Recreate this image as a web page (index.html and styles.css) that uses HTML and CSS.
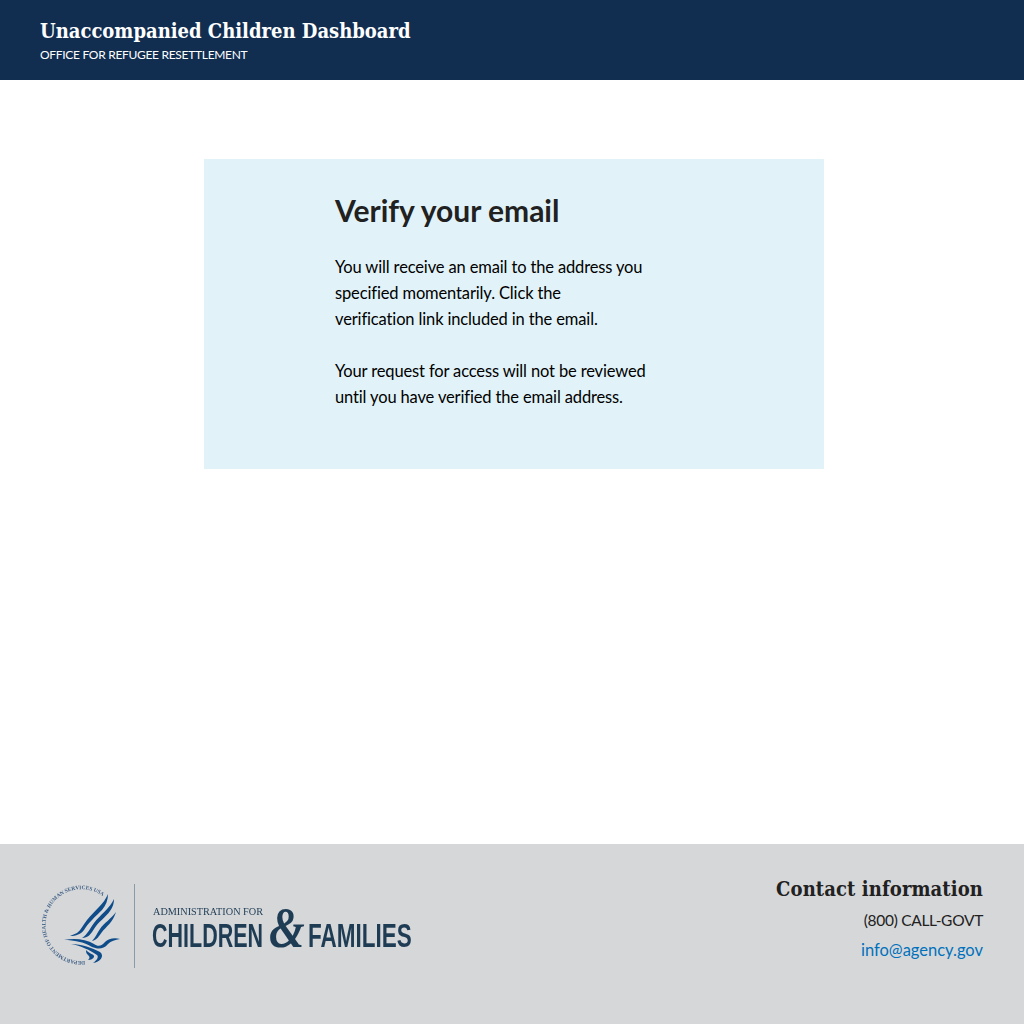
FILE: index.html
```html
<!DOCTYPE html>
<html lang="en">
<head>
  <meta charset="UTF-8">
  <meta name="viewport" content="width=device-width, initial-scale=1.0">
  <title>Unaccompanied Children Dashboard</title>
  <link rel="stylesheet" href="styles.css">
</head>
<body>

  <header class="site-header">
    <div class="site-title">Unaccompanied Children Dashboard</div>
    <div class="site-subtitle">OFFICE FOR REFUGEE RESETTLEMENT</div>
  </header>

  <main class="site-main">
    <section class="notice">
      <div class="notice-body">
        <h1>Verify your email</h1>
        <p>You will receive an email to the address you<br>specified momentarily. Click the<br>verification link included in the email.</p>
        <p>Your request for access will not be reviewed<br>until you have verified the email address.</p>
      </div>
    </section>
  </main>

  <footer class="site-footer">
    <svg class="logo" width="372" height="84" viewBox="0 0 372 84" aria-label="Administration for Children and Families">
      <defs>
        <path id="seal-ring" d="M45 77 A36 36 0 1 1 69 18"/>
      </defs>
      <!-- seal -->
      <text class="seal-text"><textPath href="#seal-ring">DEPARTMENT OF HEALTH &amp; HUMAN SERVICES USA</textPath></text>
      <g class="eagle">
        <path d="M68 10 C64 20 55 26 47 36 C43 41 41 46 37 49 L30 52 C36 52 41 50 44 46 C48 39 56 32 62 26 C66 21 68 16 68 10Z"/>
        <path d="M74 15 C70 24 60 31 54 39 C50 44 48 50 42 54 C48 54 51 50 54 45 C58 38 66 33 70 27 C73 23 74 19 74 15Z"/>
        <path d="M76 28 C71 35 64 39 60 45 C57 49 56 53 52 57 C57 56 59 52 62 48 C66 43 73 38 76 28Z"/>
        <path d="M24 56 C34 54 46 55 54 60 C58 63 62 62 65 58 C68 55 74 53 80 55 C75 56 71 57 68 60 C63 66 57 65 52 63 C44 58 34 56 24 56Z"/>
        <path d="M31 60 C42 60 52 64 60 68 C65 72 60 78 53 79 C57 76 59 73 57 71 C50 66 41 62 31 60Z"/>
        <path d="M46 66 C49 70 55 70 54 73 C53 75 51 76 48 76 C50 74 50 73 48 71 C46 69 46 68 46 66Z"/>
      </g>
      <rect class="rule" x="94" y="0" width="1" height="84"/>
      <!-- wordmark -->
      <text class="wm-small" x="113" y="31" textLength="110" lengthAdjust="spacingAndGlyphs">ADMINISTRATION FOR</text>
      <text class="wm-big" transform="translate(112 63) scale(0.632 1)">CHILDREN</text>
      <text class="wm-amp" transform="translate(229 63) scale(0.82 1)">&amp;</text>
      <text class="wm-big" transform="translate(268 63) scale(0.662 1)">FAMILIES</text>
    </svg>
    <div class="contact">
      <div class="contact-title">Contact information</div>
      <div class="contact-line contact-phone">(800) CALL-GOVT</div>
      <div class="contact-line"><a href="#">info@agency.gov</a></div>
    </div>
  </footer>

</body>
</html>
```

FILE: styles.css
```css
html, body {
  margin: 0;
  padding: 0;
}

body {
  display: flex;
  flex-direction: column;
  min-height: 100vh;
  font-family: "Lato", "Noto Sans", sans-serif;
  font-variant-ligatures: none;
  color: #000;
  background-color: #fff;
}

.site-header {
  height: 80px;
  box-sizing: border-box;
  padding: 17px 40px 0;
  background-color: #112e51;
  color: #fff;
}

.site-title {
  font-family: "DejaVu Serif Condensed", "DejaVu Serif", serif;
  font-weight: bold;
  font-size: 20px;
  line-height: 28px;
}

.site-subtitle {
  font-size: 12px;
  line-height: 20px;
  letter-spacing: -0.3px;
}

.site-main {
  flex: 1;
  padding: 79px 200px 0 204px;
}

.notice {
  box-sizing: border-box;
  width: 620px;
  height: 310px;
  padding: 31px 0 0 131px;
  background-color: #e1f3f8;
}

.notice h1 {
  margin: 0 0 24px;
  font-size: 30px;
  line-height: 40px;
  font-weight: bold;
  color: #212121;
}

.notice p {
  margin: 0 0 26px;
  font-size: 16.5px;
  line-height: 26px;
  letter-spacing: -0.14px;
}

.site-footer {
  display: flex;
  justify-content: space-between;
  height: 180px;
  box-sizing: border-box;
  padding: 0 41px 0 40px;
  background-color: #d6d7d9;
}

.logo {
  margin-top: 40px;
  filter: blur(0.3px);
}

.seal-text {
  font-family: "Liberation Serif", serif;
  font-size: 5.4px;
  font-weight: bold;
  fill: #3d5f85;
}

.eagle path {
  fill: #0f4c8a;
}

.rule {
  fill: #8a9aa6;
}

.wm-small {
  font-family: "Liberation Serif", serif;
  font-size: 10px;
  fill: #1f3c55;
}

.wm-big {
  font-family: "Liberation Sans", sans-serif;
  font-weight: bold;
  font-size: 34px;
  fill: #1f3c55;
}

.wm-amp {
  font-family: "Liberation Serif", serif;
  font-style: italic;
  font-weight: bold;
  font-size: 56px;
  fill: #1f3c55;
}

.contact {
  margin-top: 30px;
  text-align: right;
}

.contact-title {
  font-family: "DejaVu Serif Condensed", "DejaVu Serif", serif;
  font-weight: bold;
  font-size: 20px;
  line-height: 30px;
  letter-spacing: 0.1px;
  color: #212121;
}

.contact-line {
  font-size: 16.5px;
  line-height: 30px;
  color: #212121;
}

.contact-phone {
  margin-top: 1px;
  font-size: 15.5px;
  letter-spacing: -0.3px;
}

.contact-line a {
  color: #0071bc;
  text-decoration: none;
}
```
